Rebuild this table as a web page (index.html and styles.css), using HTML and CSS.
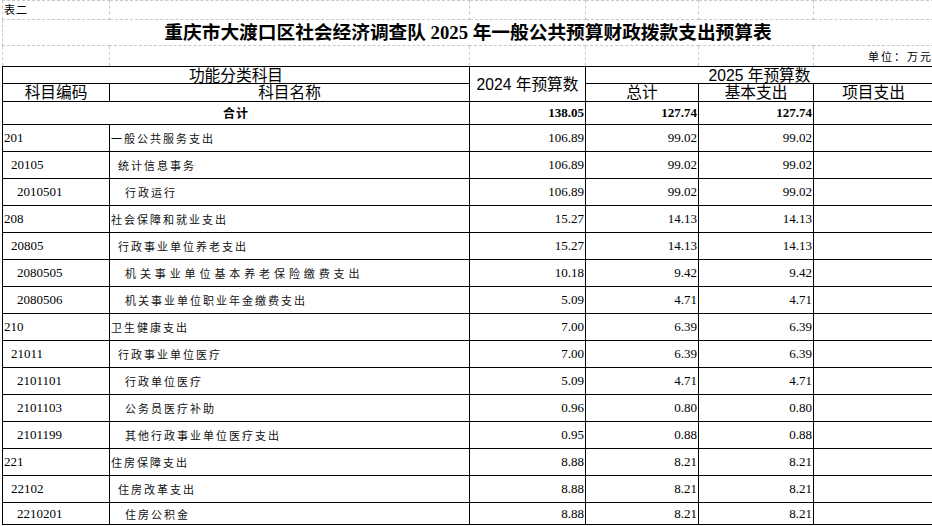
FILE: index.html
```html
<!DOCTYPE html>
<html lang="zh-CN">
<head>
<meta charset="utf-8">
<title>预算表</title>
<link rel="stylesheet" href="styles.css">
</head>
<body>
<table class="sheet">
  <colgroup>
    <col class="c1"><col class="c2"><col class="c3"><col class="c4"><col class="c5"><col class="c6">
  </colgroup>
  <tbody>
    <tr class="r-note">
      <td class="grid note">表二</td><td class="grid"></td><td class="grid"></td><td class="grid"></td><td class="grid"></td><td class="grid"></td>
    </tr>
    <tr class="r-title">
      <td class="grid title" colspan="6">重庆市大渡口区社会经济调查队 2025 年一般公共预算财政拨款支出预算表</td>
    </tr>
    <tr class="r-unit">
      <td class="grid"></td><td class="grid"></td><td class="grid"></td><td class="grid"></td><td class="grid"></td><td class="grid unit">单位：万元</td>
    </tr>
    <tr class="r-h1">
      <td class="hd" colspan="2">功能分类科目</td>
      <td class="hd" rowspan="2">2024 年预算数</td>
      <td class="hd" colspan="3">2025 年预算数</td>
    </tr>
    <tr class="r-h2">
      <td class="hd">科目编码</td>
      <td class="hd">科目名称</td>
      <td class="hd">总计</td>
      <td class="hd">基本支出</td>
      <td class="hd">项目支出</td>
    </tr>
    <tr class="r-total">
      <td class="sum-label" colspan="2">合计</td>
      <td class="num bold">138.05</td>
      <td class="num bold">127.74</td>
      <td class="num bold">127.74</td>
      <td></td>
    </tr>
    <tr class="r-data"><td class="code l1">201</td><td class="name l1">一般公共服务支出</td><td class="num">106.89</td><td class="num">99.02</td><td class="num">99.02</td><td></td></tr>
    <tr class="r-data"><td class="code l2">20105</td><td class="name l2">统计信息事务</td><td class="num">106.89</td><td class="num">99.02</td><td class="num">99.02</td><td></td></tr>
    <tr class="r-data"><td class="code l3">2010501</td><td class="name l3">行政运行</td><td class="num">106.89</td><td class="num">99.02</td><td class="num">99.02</td><td></td></tr>
    <tr class="r-data"><td class="code l1">208</td><td class="name l1">社会保障和就业支出</td><td class="num">15.27</td><td class="num">14.13</td><td class="num">14.13</td><td></td></tr>
    <tr class="r-data"><td class="code l2">20805</td><td class="name l2">行政事业单位养老支出</td><td class="num">15.27</td><td class="num">14.13</td><td class="num">14.13</td><td></td></tr>
    <tr class="r-data"><td class="code l3">2080505</td><td class="name l3 wide">机关事业单位基本养老保险缴费支出</td><td class="num">10.18</td><td class="num">9.42</td><td class="num">9.42</td><td></td></tr>
    <tr class="r-data"><td class="code l3">2080506</td><td class="name l3">机关事业单位职业年金缴费支出</td><td class="num">5.09</td><td class="num">4.71</td><td class="num">4.71</td><td></td></tr>
    <tr class="r-data"><td class="code l1">210</td><td class="name l1">卫生健康支出</td><td class="num">7.00</td><td class="num">6.39</td><td class="num">6.39</td><td></td></tr>
    <tr class="r-data"><td class="code l2">21011</td><td class="name l2">行政事业单位医疗</td><td class="num">7.00</td><td class="num">6.39</td><td class="num">6.39</td><td></td></tr>
    <tr class="r-data"><td class="code l3">2101101</td><td class="name l3">行政单位医疗</td><td class="num">5.09</td><td class="num">4.71</td><td class="num">4.71</td><td></td></tr>
    <tr class="r-data"><td class="code l3">2101103</td><td class="name l3">公务员医疗补助</td><td class="num">0.96</td><td class="num">0.80</td><td class="num">0.80</td><td></td></tr>
    <tr class="r-data"><td class="code l3">2101199</td><td class="name l3">其他行政事业单位医疗支出</td><td class="num">0.95</td><td class="num">0.88</td><td class="num">0.88</td><td></td></tr>
    <tr class="r-data"><td class="code l1">221</td><td class="name l1">住房保障支出</td><td class="num">8.88</td><td class="num">8.21</td><td class="num">8.21</td><td></td></tr>
    <tr class="r-data"><td class="code l2">22102</td><td class="name l2">住房改革支出</td><td class="num">8.88</td><td class="num">8.21</td><td class="num">8.21</td><td></td></tr>
    <tr class="r-last"><td class="code l3">2210201</td><td class="name l3">住房公积金</td><td class="num">8.88</td><td class="num">8.21</td><td class="num">8.21</td><td></td></tr>
  </tbody>
</table>
</body>
</html>
```

FILE: styles.css
```css
html, body {
  margin: 0;
  padding: 0;
  background: #ffffff;
  overflow: hidden;
}
body {
  padding-left: 2px;
  width: 940px;
  color: #000;
  font-family: "Liberation Serif", "Noto Sans CJK SC", serif;
}
.sheet {
  border-collapse: collapse;
  table-layout: fixed;
  width: 931px;
}
.c1 { width: 107px; }
.c2 { width: 360px; }
.c3 { width: 116px; }
.c4 { width: 113px; }
.c5 { width: 115px; }
.c6 { width: 120px; }

.sheet td {
  padding: 0;
  border: 1px solid #000;
  overflow: hidden;
  white-space: nowrap;
  vertical-align: middle;
  line-height: 14px;
}
.sheet td.grid {
  border: 1px dashed #c8c8c8;
}
.r-note { height: 19px; }
.r-title { height: 26px; }
.r-unit { height: 21px; }
.r-h1 { height: 17px; }
.r-h2 { height: 18px; }
.r-total { height: 23px; }
.r-data { height: 27px; }
.r-last { height: 22px; }

.r-note td { border-top: none; }
.sheet td.note {
  font-family: "Noto Sans CJK SC", sans-serif;
  font-size: 11px;
  letter-spacing: 1px;
  vertical-align: top;
  padding-left: 1px;
  padding-top: 2px;
  line-height: 12px;
}
.sheet td.title {
  font-family: "Liberation Serif", "Noto Sans CJK SC", serif;
  font-weight: bold;
  font-size: 18.7px;
  line-height: 20px;
  text-align: center;
  border-left: 1px dashed #c8c8c8;
}
.sheet td.unit {
  font-family: "Noto Sans CJK SC", sans-serif;
  font-size: 11px;
  letter-spacing: 2px;
  text-align: right;
  line-height: 12px;
}
.sheet td.hd {
  font-family: "Liberation Sans", "Noto Sans CJK SC", sans-serif;
  font-size: 15.7px;
  text-align: center;
  line-height: 15px;
}
.sum-label {
  font-family: "Noto Sans CJK SC", sans-serif;
  font-weight: bold;
  font-size: 12px;
  letter-spacing: 1px;
  text-align: center;
}
.num {
  font-family: "Liberation Serif", serif;
  font-size: 13px;
  text-align: right;
}
.sheet td.num { padding-right: 1px; }
.bold { font-weight: bold; }
.code {
  font-family: "Liberation Serif", serif;
  font-size: 13px;
}
.name {
  font-family: "Noto Sans CJK SC", sans-serif;
  font-size: 11px;
  letter-spacing: 2px;
  color: #111;
}
.name.wide { letter-spacing: 3.9px; }
.sheet td.l1 { padding-left: 1px; }
.sheet td.l2 { padding-left: 8px; }
.sheet td.l3 { padding-left: 14px; }
.sheet td.name.l1 { padding-left: 1px; }
.sheet td.name.l2 { padding-left: 8px; }
.sheet td.name.l3 { padding-left: 15px; }
```
